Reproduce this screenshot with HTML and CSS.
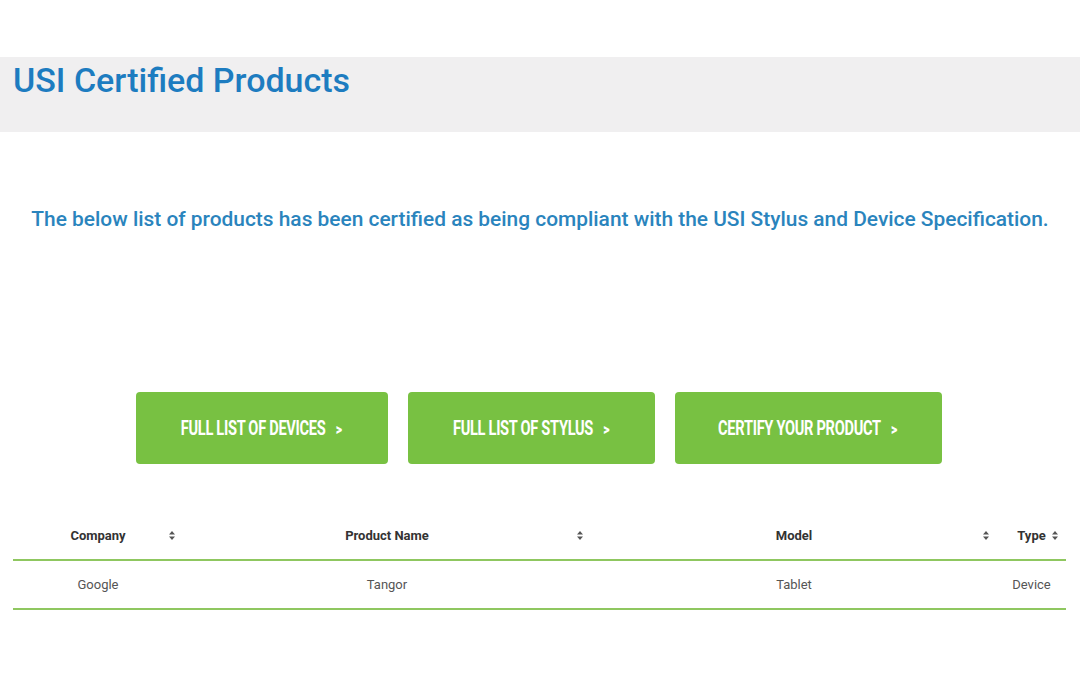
FILE: index.html
```html
<!DOCTYPE html>
<html lang="en">
<head>
  <meta charset="utf-8">
  <meta name="viewport" content="width=device-width, initial-scale=1">
  <title>USI Certified Products</title>
  <link rel="stylesheet" href="styles.css">
</head>
<body>
  <div class="page-title">
    <h1>USI Certified Products</h1>
  </div>

  <p class="intro">The below list of products has been certified as being compliant with the USI Stylus and Device Specification.</p>

  <div class="actions">
    <a class="btn btn-devices" href="#"><span class="btn-label">FULL LIST OF DEVICES<span class="chev">&gt;</span></span></a>
    <a class="btn btn-stylus" href="#"><span class="btn-label">FULL LIST OF STYLUS<span class="chev">&gt;</span></span></a>
    <a class="btn btn-certify" href="#"><span class="btn-label">CERTIFY YOUR PRODUCT<span class="chev">&gt;</span></span></a>
  </div>

  <table class="products">
    <thead>
      <tr>
        <th class="col-company">Company<span class="sort"><svg width="6" height="9" viewBox="0 0 6 9"><path d="M3 0L6 3.6H0z M3 9L0 5.4h6z" fill="#555"/></svg></span></th>
        <th class="col-name">Product Name<span class="sort"><svg width="6" height="9" viewBox="0 0 6 9"><path d="M3 0L6 3.6H0z M3 9L0 5.4h6z" fill="#555"/></svg></span></th>
        <th class="col-model">Model<span class="sort"><svg width="6" height="9" viewBox="0 0 6 9"><path d="M3 0L6 3.6H0z M3 9L0 5.4h6z" fill="#555"/></svg></span></th>
        <th class="col-type">Type<span class="sort"><svg width="6" height="9" viewBox="0 0 6 9"><path d="M3 0L6 3.6H0z M3 9L0 5.4h6z" fill="#555"/></svg></span></th>
      </tr>
    </thead>
    <tbody>
      <tr>
        <td>Google</td>
        <td>Tangor</td>
        <td>Tablet</td>
        <td>Device</td>
      </tr>
    </tbody>
  </table>
</body>
</html>
```

FILE: styles.css
```css
  body {
    margin: 0;
    font-family: Roboto, "Liberation Sans", sans-serif;
    background-color: #fff;
    color: #333;
  }
  .page-title {
    margin-top: 57px;
    height: 75px;
    background-color: #f0eff0;
    padding: 0 13px;
  }
  h1 {
    margin: 0;
    padding-top: 1px;
    font-size: 34px;
    font-weight: 500;
    line-height: 44px;
    color: #1d7cc0;
  }
  .intro {
    margin: 75px 0 0;
    text-align: center;
    font-size: 20.9px;
    font-weight: 500;
    line-height: 24px;
    color: #2a84bd;
  }
  .actions {
    margin-top: 161px;
    display: flex;
    justify-content: center;
    gap: 20px;
    padding-right: 3px;
  }
  .btn {
    display: flex;
    align-items: center;
    justify-content: center;
    height: 72px;
    border-radius: 4px;
    background-color: #78c142;
    color: #fff;
    text-decoration: none;
  }
  .btn-devices { width: 252px; }
  .btn-stylus { width: 247px; }
  .btn-certify { width: 267px; }
  .btn-label {
    display: inline-block;
    font-size: 20px;
    font-weight: 700;
    letter-spacing: -0.4px;
    transform: scaleX(0.73);
    white-space: nowrap;
  }
  .chev {
    margin-left: 14px;
    font-size: 17px;
    font-weight: 900;
  }
  .products {
    margin: 49px 0 0 13px;
    width: 1053px;
    border-collapse: collapse;
    table-layout: fixed;
    font-size: 13px;
  }
  .products th {
    position: relative;
    height: 44px;
    padding: 0 0 2px;
    font-weight: 700;
    color: #333;
    border-bottom: 2px solid #8fc760;
  }
  .products td {
    height: 47px;
    padding: 0;
    text-align: center;
    color: #555;
    border-bottom: 2px solid #8fc760;
  }
  .col-company { width: 170px; }
  .col-name { width: 408px; }
  .col-model { width: 406px; }
  .col-type { width: 69px; }
  .sort {
    position: absolute;
    right: 8px;
    top: 18px;
    line-height: 0;
  }
```
